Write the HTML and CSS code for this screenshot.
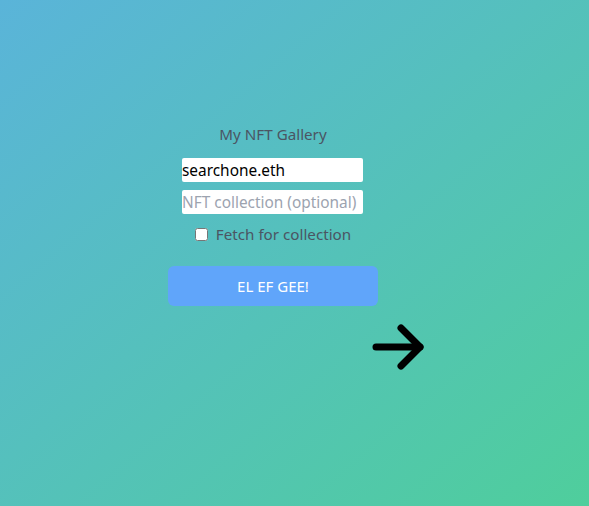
FILE: index.html
```html
<!DOCTYPE html>
<html lang="en">
<head>
<meta charset="utf-8">
<title>My NFT Gallery</title>
<link rel="stylesheet" href="styles.css">
</head>
<body>
<main class="page">
  <div class="panel">
    <h1 class="title">My NFT Gallery</h1>
    <input class="field" type="text" value="searchone.eth">
    <input class="field" type="text" placeholder="NFT collection (optional)">
    <label class="check"><input class="box" type="checkbox"><span>Fetch for collection</span></label>
    <button class="go" type="button">EL EF GEE!</button>
  </div>
  <div class="arrow-row">
    <svg class="arrow" width="56" height="48" viewBox="0 0 56 48" fill="none" stroke="#000" stroke-width="7" stroke-linecap="round" stroke-linejoin="round">
      <path d="M6 24 H50"/>
      <path d="M31 5 L50 24 L31 43"/>
    </svg>
  </div>
</main>
</body>
</html>
```
FILE: styles.css
```css
* { box-sizing: border-box; }
html, body { margin: 0; padding: 0; }
body {
  width: 589px;
  height: 506px;
  overflow: hidden;
  background: linear-gradient(to bottom right, #5ab4d9, #4fce9c);
  font-family: "Noto Sans", "Open Sans", sans-serif;
  color: #4b5563;
}
.page {
  padding-top: 122px;
}
.panel {
  width: 210px;
  margin-left: 168px;
  display: flex;
  flex-direction: column;
  align-items: center;
}
.title {
  margin: 0;
  font-size: 15.2px;
  font-weight: 400;
  line-height: 24px;
  color: #4b5563;
}
.field {
  width: 181px;
  height: 24px;
  margin-top: 8px;
  margin-right: 1px;
  padding: 0;
  border: none;
  border-radius: 2px;
  background: #fff;
  font-family: inherit;
  font-size: 15.4px;
  color: #000;
  outline: none;
}
.title + .field { margin-top: 12px; }
.field::placeholder { color: #9ca3af; }
.check {
  margin-top: 8px;
  height: 24px;
  display: flex;
  align-items: center;
  font-size: 15.2px;
  line-height: 24px;
}
.box {
  width: 13px;
  height: 13px;
  margin: 0 8px 0 0;
}
.go {
  margin-top: 20px;
  width: 210px;
  height: 40px;
  border: none;
  border-radius: 6px;
  background: #60a5fa;
  color: #fff;
  font-family: inherit;
  font-size: 15px;
}
.arrow-row {
  margin-top: 17px;
  padding-left: 370px;
  line-height: 0;
}
```
